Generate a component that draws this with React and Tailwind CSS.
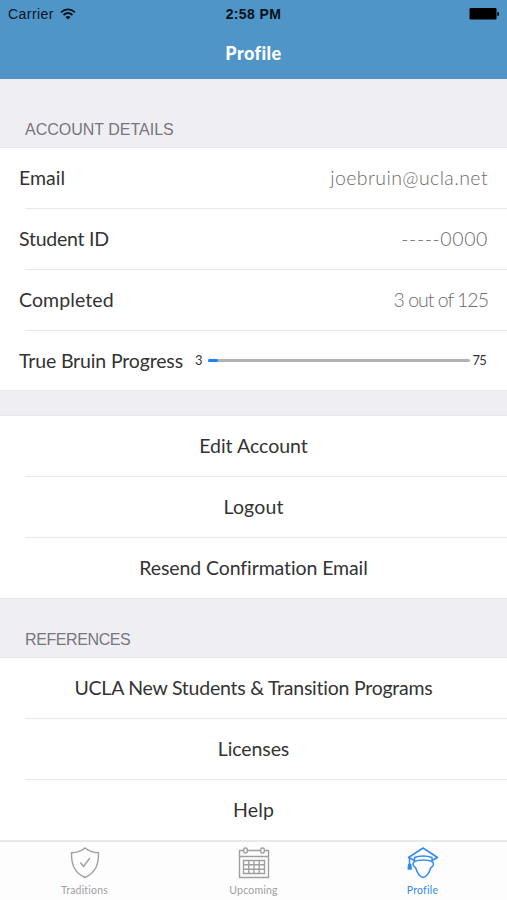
import { useState } from "react";
import clsx from "clsx";

const details = [
  { label: "Email", value: "joebruin@ucla.net", labelClass: "", valueClass: "tracking-[0.42px]" },
  { label: "Student ID", value: "-----0000", labelClass: "tracking-[-0.25px]", valueClass: "tracking-[0.6px]" },
  { label: "Completed", value: "3 out of 125", labelClass: "tracking-[0.1px]", valueClass: "tracking-[-1px]" },
];

const actions = [
  { label: "Edit Account", className: "" },
  { label: "Logout", className: "tracking-[0.15px]" },
  { label: "Resend Confirmation Email", className: "tracking-[-0.1px]" },
];

const references = [
  { label: "UCLA New Students & Transition Programs", className: "tracking-[-0.24px]" },
  { label: "Licenses", className: "tracking-[-0.1px]" },
  { label: "Help", className: "tracking-[0.2px]" },
];

function WifiIcon() {
  return (
    <svg width="16" height="12" viewBox="0 0 16 12" fill="none" stroke="#06121c" strokeWidth="1.7">
      <path d="M1 4.3C5 .5 11 .5 15 4.3" />
      <path d="M3.5 7C6.200 4.600 9.800 4.600 12.500 7" />
      <path d="M8 11.500 5.500 9C7 7.700 9 7.700 10.500 9Z" fill="#06121c" stroke="none" />
    </svg>
  );
}

function BatteryIcon() {
  return (
    <svg width="30" height="12" viewBox="0 0 30 12" fill="#000">
      <rect x=".5" width="27" height="11.500" rx="1.200" />
      <path d="M28.300 4a2 2 0 0 1 0 4Z" />
    </svg>
  );
}

function ShieldIcon() {
  return (
    <svg width="32" height="34" viewBox="0 0 32 34" fill="none" stroke="currentColor" strokeWidth="1.400">
      <path d="M16 2C12.500 5 8 6.500 2.500 6.800C2.300 18 5 26.500 16 31.500C27 26.500 29.700 18 29.500 6.800C24 6.500 19.500 5 16 2Z" />
      <path d="m11.300 16.500 3.200 4 6.300-8.500" />
    </svg>
  );
}

function CalendarIcon() {
  return (
    <svg width="32" height="34" viewBox="0 0 32 34" fill="none" stroke="currentColor" strokeWidth="1.400">
      <path d="M5.500 4.500H1.500V31.500H30.500V4.500H26.500M9.500 4.500H22.500M1.500 10.500H30.500" />
      <rect x="5.700" y="2" width="3.600" height="5" rx="1.500" />
      <rect x="22.700" y="2" width="3.600" height="5" rx="1.500" />
      <path d="M5.500 14.500H26.500V27.500H5.500ZM5.500 18.800H26.500M5.500 23.200H26.500M10.800 14.500V27.500M16 14.500V27.500M21.200 14.500V27.500" />
    </svg>
  );
}

function GraduateIcon() {
  return (
    <svg width="32" height="34" viewBox="0 0 32 34" fill="none" stroke="currentColor" strokeWidth="1.500" strokeLinejoin="round">
      <path d="M7.500 14.500 1.500 11.500 16 2 30.500 11.500 25 14.500" />
      <path d="M7.500 15.500V11.500C12 9.500 20 9.500 25 11.500V15.500" />
      <path d="M7.500 15.500C12 13.500 20 13.500 25 15.500" />
      <path d="M7.500 15.500C5 17 6 20.500 8.500 21.500C10 26 12.500 31 16 31.500C19.500 31 22.500 26 24 21.500C26.500 20.500 27.500 17 25 15.500" />
      <path d="M2.500 12V19" />
      <path d="M1.700 18.500h2l.5 4.500h-3Z" fill="currentColor" />
    </svg>
  );
}

const tabs = [
  { id: "traditions", label: "Traditions", Icon: ShieldIcon },
  { id: "upcoming", label: "Upcoming", Icon: CalendarIcon },
  { id: "profile", label: "Profile", Icon: GraduateIcon },
];

function Divider() {
  return <div className="ml-[25px] h-px bg-[#e8e8ea]" />;
}

function SectionTitle({ children, className }) {
  return (
    <h2 className={clsx("pl-[25px] font-['Liberation_Sans'] text-[16px] leading-5 text-[#77777b]", className)}>
      {children}
    </h2>
  );
}

function ActionList({ items }) {
  return (
    <div className="bg-white">
      {items.map((item, i) => (
        <div key={item.label}>
          {i > 0 && <Divider />}
          <button className="block h-[60px] w-full text-center">
            <span className={item.className}>{item.label}</span>
          </button>
        </div>
      ))}
    </div>
  );
}

export default function App() {
  const [activeTab, setActiveTab] = useState("profile");

  return (
    <div className="flex h-[900px] w-[507px] flex-col bg-[#efeef3] font-[Lato,sans-serif] text-[19.500px] text-[#333]">
      {/* Header */}
      <header className="h-[79px] bg-[#5095c7]">
        <div className="grid h-[28px] grid-cols-3 items-center px-2 font-['Liberation_Sans'] text-[14px] text-[#06121c]">
          <div className="flex items-center gap-1.5">
            <span className="tracking-[0.45px]">Carrier</span>
            <WifiIcon />
          </div>
          <span className="text-center font-bold tracking-[0.4px]">2:58 PM</span>
          <div className="flex justify-end">
            <BatteryIcon />
          </div>
        </div>
        <h1 className="pt-[11px] text-center text-[18px] leading-7 font-black tracking-[0.45px] text-white">Profile</h1>
      </header>

      <div className="flex h-[69px] items-end border-b border-[#e6e6e9] pb-[7px]">
        <SectionTitle>ACCOUNT DETAILS</SectionTitle>
      </div>

      <div className="bg-white">
        {details.map((row) => (
          <div key={row.label}>
            <div className="flex h-[60px] items-center justify-between px-[19px] pb-px">
              <span className={row.labelClass}>{row.label}</span>
              <span className={clsx("font-light text-[#6c6c6c]", row.valueClass)}>{row.value}</span>
            </div>
            <Divider />
          </div>
        ))}
        <div className="flex h-[59px] items-center pr-[21px] pl-[19px]">
          <span className="tracking-[-0.15px]">True Bruin Progress</span>
          <span className="ml-auto text-[13px]">3</span>
          <div className="mr-[3px] ml-[5px] h-[3px] w-[262px] rounded-full bg-[#b2b2b2]">
            <div className="h-full rounded-full bg-[#2080f5]" style={{ width: `${(3 / 75) * 100}%` }} />
          </div>
          <span className="text-[13px] tracking-[-0.8px]">75</span>
        </div>
      </div>

      <div className="h-[26px] border-y border-[#e8e8ea]" />
      <ActionList items={actions} />

      <div className="flex h-[60px] items-end border-y border-[#e6e6e9] pb-[7px]">
        <SectionTitle className="tracking-[-0.4px]">REFERENCES</SectionTitle>
      </div>
      <ActionList items={references} />

      {/* Tab bar */}
      <nav className="grid grow grid-cols-3 border-t-2 border-[#e9e9e9] bg-[#fdfdfd]">
        {tabs.map(({ id, label, Icon }) => (
          <button
            key={id}
            className={clsx(
              "flex flex-col items-center pt-1",
              activeTab === id ? "text-[#318bf5]" : "text-[#a0a0a0]"
            )}
            onClick={() => setActiveTab(id)}
          >
            <Icon />
            <span className="pt-[2px] text-[10.500px] leading-4 tracking-[0.2px]">{label}</span>
          </button>
        ))}
      </nav>
    </div>
  );
}
